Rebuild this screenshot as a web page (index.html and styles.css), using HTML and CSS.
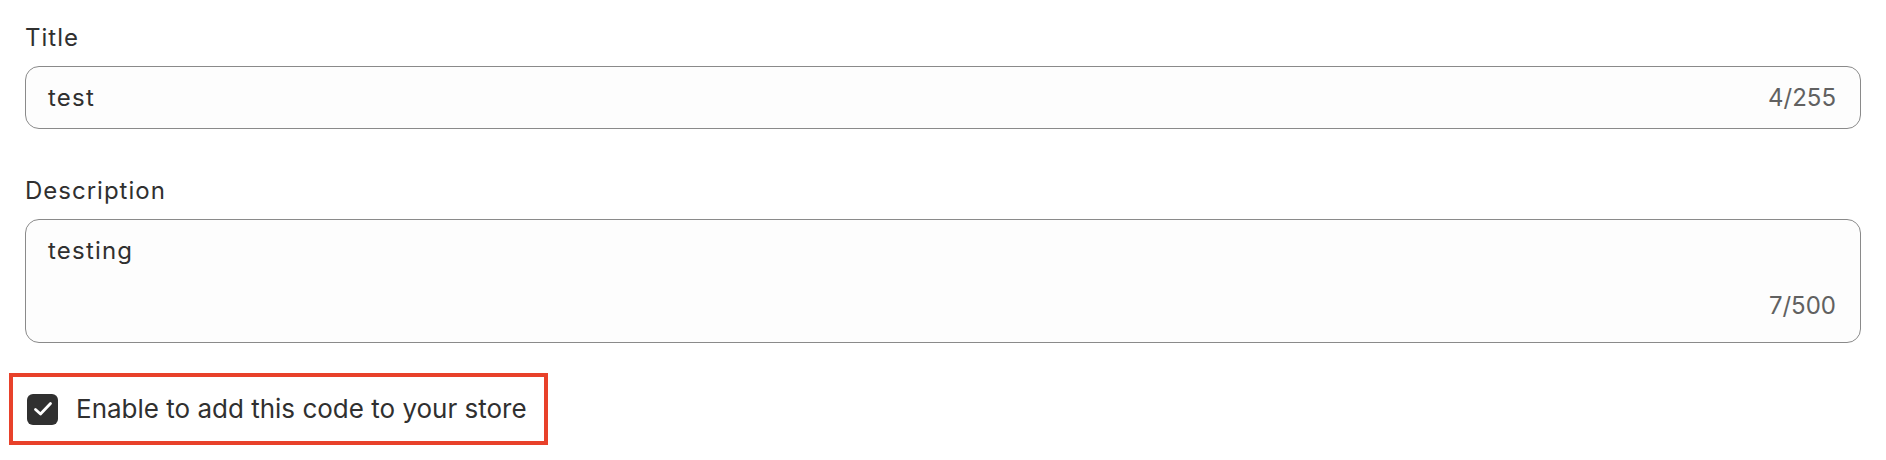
FILE: index.html
```html
<!DOCTYPE html>
<html>
    <head>
        <meta charset="utf-8" />
        <title>Code settings</title>
        <link rel="stylesheet" href="styles.css">
    </head>

    <body>
        <div class="form">

            <div class="field">
                <label class="field-label">Title</label>
                <div class="text-box">
                    <span class="value">test</span>
                    <span class="counter">4/255</span>
                </div>
            </div>

            <div class="field">
                <label class="field-label">Description</label>
                <div class="text-box multiline">
                    <span class="value">testing</span>
                    <span class="counter">7/500</span>
                </div>
            </div>

            <div class="highlight">
                <label class="check-row">
                    <span class="check-box">
                        <svg viewBox="0 0 22 22">
                            <path d="M3.5 11.5 L8.5 16 L18.5 5.5" fill="none" stroke="#fff" stroke-width="2.8" stroke-linecap="round" stroke-linejoin="round"/>
                        </svg>
                    </span>
                    <span class="check-text">Enable to add this code to your store</span>
                </label>
            </div>

        </div>
    </body>
</html>
```

FILE: styles.css
```css
body{
    margin: 0;
    background-color: #ffffff;
    font-family: Inter, "Noto Sans", sans-serif;
    color: #303030;
}
.form{
    padding: 22px 25px 0 25px;
    display: flex;
    flex-direction: column;
}
.field{
    display: flex;
    flex-direction: column;
    gap: 12px;
    margin-bottom: 46px;
}
.field + .field{
    margin-bottom: 30px;
}
.field-label{
    font-size: 24px;
    line-height: 32px;
    letter-spacing: 1px;
}
.text-box{
    display: flex;
    align-items: center;
    justify-content: space-between;
    background-color: #fdfdfd;
    border: 1px solid #8a8a8a;
    border-radius: 14px;
    padding: 14.5px 24px 14.5px 22px;
    font-size: 24px;
    line-height: 32px;
}
.value{
    letter-spacing: 1.2px;
}
.multiline{
    flex-direction: column;
    align-items: stretch;
    gap: 23px;
    padding: 15px 24px 20px 22px;
}
.multiline .counter{
    align-self: flex-end;
}
.counter{
    color: #616161;
}
.highlight{
    align-self: flex-start;
    margin-left: -16px;
    border: 4px solid #e8412a;
    padding: 0 17px 0 14px;
    height: 64px;
    display: flex;
    align-items: center;
}
.check-row{
    display: flex;
    align-items: center;
    gap: 18px;
    font-size: 26px;
    line-height: 32px;
}
.check-box{
    width: 31px;
    height: 31px;
    border-radius: 6px;
    background-color: #303030;
    display: flex;
    align-items: center;
    justify-content: center;
}
.check-box svg{
    width: 22px;
    height: 22px;
}
```
